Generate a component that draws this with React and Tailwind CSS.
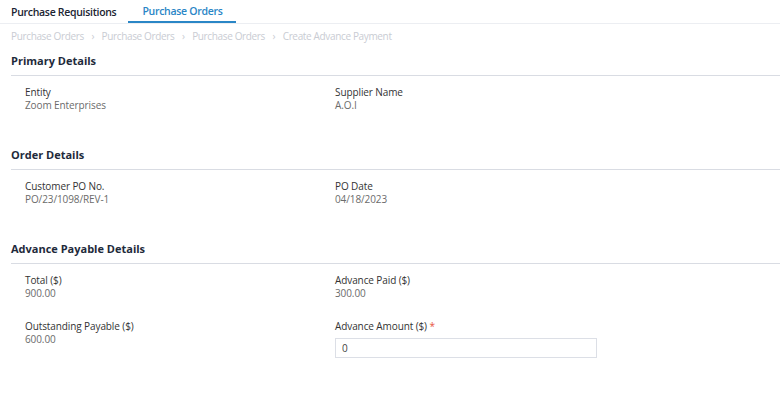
import React, { useState } from 'react';

const FONT = { fontFamily: '"Open Sans", "Noto Sans", sans-serif' };

const Field = ({ label, value }) => (
  <div className="text-[10px] leading-[13px] tracking-[-0.1px]">
    <div className="text-[#333]">{label}</div>
    <div className="text-[#6b6b6b]">{value}</div>
  </div>
);

const Section = ({ title, children }) => (
  <div className="mt-[35px] first:mt-0">
    <h3 className="text-[11px] leading-[16px] font-bold text-[#1e2a3b] pb-[6px] border-b border-[#d9dce3]">{title}</h3>
    <div className="pl-[14px] pt-[10px] grid grid-cols-[310px_1fr] gap-y-[20px]">{children}</div>
  </div>
);

const Crumb = ({ children }) => <span>{children}</span>;

export default function App() {
  const [amount, setAmount] = useState('0');

  return (
    <div className="w-[780px] h-[401px] bg-white overflow-hidden" style={FONT}>
      {/* Tabs */}
      <div className="flex h-[24px] border-b border-[#eceef2]">
        <button className="pl-[11px] pr-[12px] text-[10.5px] tracking-[-0.3px] font-semibold text-[#1b2432] leading-[20px]">Purchase Requisitions</button>
        <button className="px-[14px] text-[10.5px] tracking-[-0.3px] font-semibold text-[#2a86c6] leading-[20px] border-b-2 border-[#2a86c6]">Purchase Orders</button>
      </div>

      {/* Breadcrumb */}
      <div className="px-[11px] pt-[5px] text-[10px] leading-[14px] tracking-[-0.35px] text-[#c9ccd3] flex gap-[7.5px]">
        <Crumb>Purchase Orders</Crumb><span>›</span>
        <Crumb>Purchase Orders</Crumb><span>›</span>
        <Crumb>Purchase Orders</Crumb><span>›</span>
        <Crumb>Create Advance Payment</Crumb>
      </div>

      <div className="pl-[11px] pt-[10px]">
        <Section title="Primary Details">
          <Field label="Entity" value="Zoom Enterprises" />
          <Field label="Supplier Name" value="A.O.I" />
        </Section>

        <Section title="Order Details">
          <Field label="Customer PO No." value="PO/23/1098/REV-1" />
          <Field label="PO Date" value="04/18/2023" />
        </Section>

        <Section title="Advance Payable Details">
          <Field label="Total ($)" value="900.00" />
          <Field label="Advance Paid ($)" value="300.00" />
          <Field label="Outstanding Payable ($)" value="600.00" />
          <div className="text-[10px] leading-[13px] tracking-[-0.1px]">
            <div className="text-[#333]">
              Advance Amount ($) <span className="text-[#e8553e]">*</span>
            </div>
            <input
              value={amount}
              onChange={(e) => setAmount(e.target.value)}
              className="mt-[5px] w-[262px] h-[20px] border border-[#dcdfe6] px-[6px] text-[10px] text-[#444] outline-none"
            />
          </div>
        </Section>
      </div>
    </div>
  );
}
